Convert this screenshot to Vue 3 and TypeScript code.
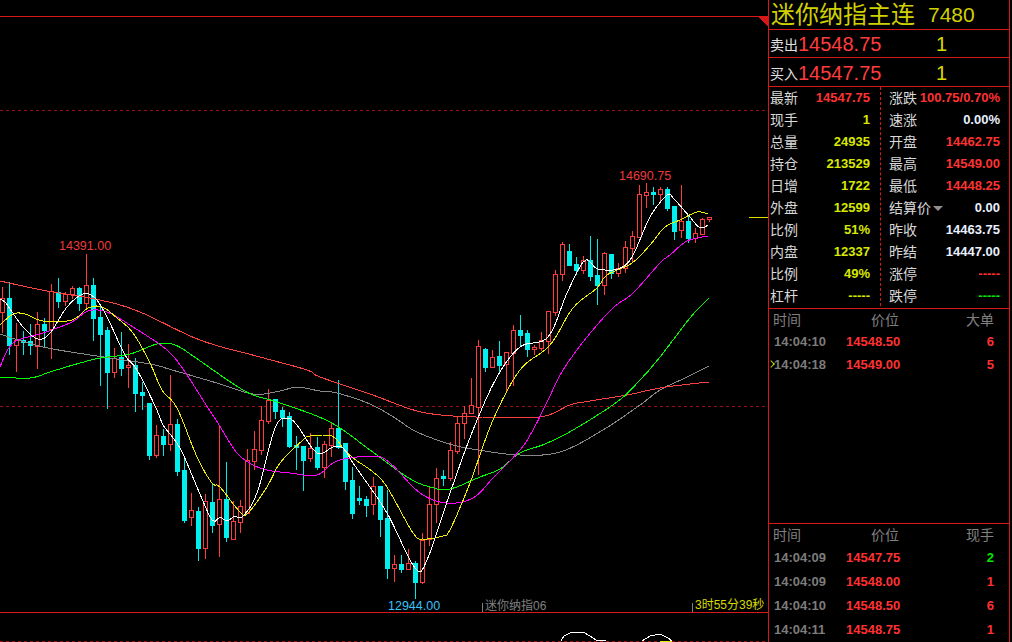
<script setup lang="ts">
const raw: [string, number, number, number, number][] = [
  ['r',287,298,312,332],['c',282,298,345,354],['r',323,340,345,371],['c',331,340,342,354],['c',324,341,345,354],
  ['r',312,324,346,368],['c',318,324,330,347],['r',284,291,329,358],['c',278,292,301,307],['r',292,294,301,305],
  ['r',286,288,294,298],['c',287,288,303,310],['r',254,285,303,307],['c',278,285,318,340],['c',307,317,334,385],
  ['c',327,330,372,408],['r',348,358,372,377],['c',332,357,368,375],['r',344,365,367,387],['c',358,365,393,411],
  ['c',382,392,395,409],['c',403,403,455,459],['r',425,435,455,457],['c',429,436,444,455],['r',375,424,444,450],
  ['c',419,424,471,475],['c',458,470,520,522],['r',493,510,517,525],['c',507,511,548,560],['r',494,501,548,558],
  ['c',483,502,525,532],['r',425,499,524,556],['c',462,499,537,541],['r',501,521,539,539],['r',500,506,522,532],
  ['r',449,460,513,513],['r',431,449,461,469],['r',406,420,450,454],['r',389,400,421,423],['c',399,399,411,418],
  ['c',407,410,417,426],['c',412,416,446,447],['c',436,445,447,469],['c',446,446,460,490],['r',433,448,458,461],
  ['c',437,447,467,469],['r',441,444,467,477],['r',422,428,445,456],['c',380,428,447,448],['c',443,443,481,489],
  ['c',467,480,513,518],['c',486,498,500,504],['c',496,499,505,516],['r',477,486,504,514],['c',486,486,519,536],
  ['c',490,518,568,578],['r',555,564,568,581],['c',555,564,569,572],['r',549,563,569,569],['c',561,563,582,598],
  ['r',533,540,582,583],['r',487,504,539,545],['r',468,478,504,522],['c',470,476,478,485],['r',442,450,478,480],
  ['r',417,423,451,453],['r',406,413,423,438],['r',378,405,413,413],['r',340,346,407,474],['c',348,349,367,371],
  ['r',350,357,367,367],['c',341,356,365,373],['r',352,352,364,390],['r',325,330,353,385],['c',315,330,335,346],
  ['c',330,333,349,356],['r',345,347,349,354],['r',332,340,348,350],['r',311,311,341,353],['r',270,274,312,315],
  ['r',242,244,274,280],['c',244,251,265,265],['c',257,264,270,274],['r',256,260,270,273],['c',236,260,276,280],
  ['c',239,275,285,304],['r',252,253,285,294],['c',254,254,273,278],['r',263,268,273,276],['r',241,247,268,272],
  ['r',231,236,248,262],['r',185,194,237,237],['r',183,192,195,207],['c',187,192,194,204],['r',187,189,194,200],
  ['c',187,189,208,210],['c',206,206,231,239],['r',185,221,230,237],['c',215,221,238,242],['r',228,233,238,242],
  ['r',218,219,234,234],['r',217,217,219,221],
]
const candles = raw.map((c, i) => {
  const x = 2 + 7 * i
  const [t, hi, top, bot, lo] = c
  return {
    key: i,
    cls: t === 'r' ? 'up' : 'down',
    wick: t === 'r'
      ? `M${x + 0.5} ${hi}V${top}M${x + 0.5} ${bot + 1}V${lo + 1}`
      : `M${x + 0.5} ${hi}V${lo + 1}`,
    rx: t === 'r' ? x - 1.5 : x - 2,
    ry: t === 'r' ? top + 0.5 : top,
    rw: t === 'r' ? 4 : 5,
    rh: t === 'r' ? bot - top : bot - top + 1,
  }
})
// smooth a hand-read list of vertices into a moving-average curve
function smooth(src: string): string {
  const p = src.split(' ').map(s => s.split(',').map(Number))
  const out: string[] = []
  for (let i = 0; i < p.length - 1; i++) {
    const a = p[Math.max(0, i - 1)], b = p[i], c = p[i + 1], d = p[Math.min(p.length - 1, i + 2)]
    const n = Math.max(2, Math.round((c[0] - b[0]) / 3))
    for (let k = 0; k < n; k++) {
      const t = k / n, t2 = t * t, t3 = t2 * t
      const cr = (j: 0 | 1) => 0.5 * (2 * b[j] + (c[j] - a[j]) * t + (2 * a[j] - 5 * b[j] + 4 * c[j] - d[j]) * t2 + (3 * b[j] - a[j] - 3 * c[j] + d[j]) * t3)
      out.push(`${cr(0).toFixed(1)},${cr(1).toFixed(1)}`)
    }
  }
  const last = p[p.length - 1]
  out.push(`${last[0]},${last[1]}`)
  return out.join(' ')
}
const lines: { cls: string; points: string }[] = [
  { cls: 'l-grey', points: '0,334 43,347 97,356 150,364 172,370 217,383 253,394 280,391 297,387 320,391 337,393 370,404 395,418 417,432 453,445 485,451 520,455 560,452 603,430 640,405 660,390 685,378 709,366' },
  { cls: 'l-long', points: '0,281 47,291 100,300 140,312 200,340 260,357 307,370 320,377 370,394 417,411 453,416 480,417 540,417 570,405 590,401 627,395 660,388 690,384 709,382' },
  { cls: 'l-green', points: '0,377 30,378 50,372 73,365 100,358 130,354 157,344 175,345 193,356 213,370 235,385 253,395 280,403 330,422 370,450 407,477 430,487 450,489 480,477 500,469 520,453 545,444 573,430 617,402 640,380 660,357 690,318 709,298' },
  { cls: 'l-mag', points: '0,367 13,343 43,333 72,322 88,311 107,312 133,327 167,350 185,372 208,408 218,423 230,443 242,458 263,469 290,473 317,475 337,461 373,456 390,463 420,493 447,503 473,498 493,478 520,450 533,430 548,400 563,370 587,337 613,308 633,293 660,263 670,255 687,241 708,236' },
  { cls: 'l-yel', points: '0,325 13,314 25,314 43,321 72,320 88,308 102,307 117,318 133,333 150,363 162,390 177,408 197,457 212,483 220,487 240,512 248,513 267,487 280,463 303,440 310,436 332,436 343,448 353,458 373,472 387,487 413,533 423,539 443,536 450,530 470,483 493,420 520,370 550,345 573,308 597,288 607,275 632,263 650,245 665,227 680,220 697,212 708,214' },
  { cls: 'l-wht', points: '0,300 5,302 23,327 38,339 50,333 67,307 83,294 95,298 107,317 125,355 137,370 157,410 163,425 180,448 197,487 212,520 220,517 227,521 235,516 242,517 257,493 275,428 287,418 297,425 317,453 333,447 343,448 353,463 360,473 387,513 415,568 427,560 450,493 473,430 497,377 520,347 548,337 567,293 583,262 590,262 598,269 618,269 632,257 650,217 667,195 673,198 690,217 700,228 708,225' },
].map(l => ({ cls: l.cls, points: smooth(l.points) }))
const statsL = [
  ['最新', '14547.75', 'red'], ['现手', '1', 'yel'], ['总量', '24935', 'yel'], ['持仓', '213529', 'yel'], ['日增', '1722', 'yel'],
  ['外盘', '12599', 'yel'], ['比例', '51%', 'yel'], ['内盘', '12337', 'yel'], ['比例', '49%', 'yel'], ['杠杆', '-----', 'yel'],
]
const statsR = [
  ['涨跌', '100.75/0.70%', 'red'], ['速涨', '0.00%', 'wht'], ['开盘', '14462.75', 'red'], ['最高', '14549.00', 'red'], ['最低', '14448.25', 'red'],
  ['结算价', '0.00', 'wht'], ['昨收', '14463.75', 'wht'], ['昨结', '14447.00', 'wht'], ['涨停', '-----', 'red'], ['跌停', '-----', 'grn'],
]
const big = [['14:04:10', '14548.50', '6'], ['14:04:18', '14549.00', '5']]
const ticks = [
  ['14:04:09', '14547.75', '2', 'grn'], ['14:04:09', '14548.00', '1', 'red'],
  ['14:04:10', '14548.50', '6', 'red'], ['14:04:11', '14548.75', '1', 'red'],
]
</script>

<template>
  <div class="app">
    <div class="chart">
      <svg class="plot" width="768" height="642" viewBox="0 0 768 642">
        <path class="frame" d="M0 16.5H768M0 612.5H768" />
        <path class="corner" d="M758 17H768V27Z" />
        <path class="dots" d="M0 110.5H768M0 406.5H768M0 641.5H768" />
        <path class="tick" d="M482.5 603V612M692.5 603V612" />
        <path class="marker" d="M749 217.5H768" />
        <g v-for="c in candles" :key="c.key" :class="c.cls">
          <path class="wick" :d="c.wick" />
          <rect class="body" :x="c.rx" :y="c.ry" :width="c.rw" :height="c.rh" />
        </g>
        <polyline v-for="l in lines" :key="l.cls" :class="l.cls" :points="l.points" />
        <path class="l-wht" d="M561 641L564 636L570 633L583 632L590 636L596 640L606 641M642 641L650 636L660 634L668 638L672 641" />
        <path class="l-yel2" d="M660 641.5H672" />
        <text class="lbl lbl-red" x="59" y="250">14391.00</text>
        <text class="lbl lbl-red" x="619" y="180">14690.75</text>
        <text class="lbl lbl-blue" x="388" y="610">12944.00</text>
        <text class="lbl lbl-grey" x="485" y="610">迷你纳指06</text>
        <text class="lbl lbl-yel" x="695" y="609">3时55分39秒</text>
      </svg>
    </div>
    <aside class="side">
      <div class="title"><span class="name">迷你纳指主连</span><span class="code">7480</span></div>
      <div class="quote q-first">
        <span class="q-label">卖出</span><span class="q-price">14548.75</span><span class="q-size">1</span>
      </div>
      <div class="quote q-second">
        <span class="q-label">买入</span><span class="q-price">14547.75</span><span class="q-size">1</span>
      </div>
      <div class="stats">
        <div class="col col-l">
          <div v-for="(s, i) in statsL" :key="i" class="stat">
            <span class="s-label">{{ s[0] }}</span><span class="s-val" :class="s[2]">{{ s[1] }}</span>
          </div>
        </div>
        <div class="col col-r">
          <div v-for="(s, i) in statsR" :key="i" class="stat">
            <span class="s-label">{{ s[0] }}<i v-if="s[0] === '结算价'" class="caret"></i></span><span class="s-val" :class="s[2]">{{ s[1] }}</span>
          </div>
        </div>
      </div>
      <div class="trades big">
        <div class="t-row t-head"><span>时间</span><span>价位</span><span>大单</span></div>
        <div v-for="(r, i) in big" :key="i" class="t-row t-data">
          <span class="t-time">{{ r[0] }}<i v-if="i === 1" class="pointer"></i></span><span class="red">{{ r[1] }}</span><span class="red">{{ r[2] }}</span>
        </div>
      </div>
      <div class="trades tape">
        <div class="t-row t-head"><span>时间</span><span>价位</span><span>现手</span></div>
        <div v-for="(r, i) in ticks" :key="i" class="t-row t-data">
          <span class="t-time">{{ r[0] }}</span><span class="red">{{ r[1] }}</span><span :class="r[3]">{{ r[2] }}</span>
        </div>
      </div>
    </aside>
  </div>
</template>

<style>
html, body { margin: 0; background: #000; overflow: hidden; }
</style>

<style scoped>
.app { display: flex; width: 1012px; height: 642px; background: #000; overflow: hidden; font-family: "Liberation Sans", "Noto Sans CJK SC", sans-serif; }
.chart { width: 768px; flex: none; height: 642px; }
.plot { display: block; shape-rendering: crispEdges; }
.plot path, .plot polyline { fill: none; }
.frame { stroke: #d81818; }
.plot .corner { fill: #d81818; stroke: none; }
.dots { stroke: #a01010; stroke-dasharray: 3 3; }
.tick { stroke: #808080; }
.marker { stroke: #e0e000; }
.up .wick { stroke: #ff3c3c; }
.up .body { fill: #000; stroke: #ff3c3c; }
.down .wick { stroke: #00e8e8; }
.down .body { fill: #00f0f0; }
.l-grey { stroke: #888; }
.l-long { stroke: #ff4040; }
.l-green { stroke: #00ff00; }
.l-mag { stroke: #ff00ff; }
.l-yel { stroke: #f0f000; }
.l-wht { stroke: #fff; }
.l-yel2 { stroke: #e8e800; }
.lbl { font-size: 12.5px; shape-rendering: auto; }
.lbl-red { fill: #ee3a3a; }
.lbl-blue { fill: #38c0f8; }
.lbl-grey { fill: #808080; font-size: 12px; }
.lbl-yel { fill: #d8d800; font-size: 12px; }

.side { width: 242px; flex: none; height: 642px; box-sizing: border-box; border-left: 1px solid #d81818; border-right: 1px solid #d81818; display: flex; flex-direction: column; color: #d8d8d8; }
.title { height: 29px; flex: none; box-sizing: border-box; padding-left: 2px; display: flex; align-items: center; color: #d0d000; white-space: nowrap; }
.name { font-size: 24px; width: 157px; line-height: 29px; }
.code { font-size: 21px; line-height: 29px; }
.quote { flex: none; box-sizing: border-box; border-top: 1px solid #d81818; display: flex; align-items: center; padding-left: 1px; white-space: nowrap; }
.q-first { height: 28px; padding-top: 1px; }
.q-second { height: 29px; padding-top: 2px; }
.q-label { font-size: 14px; width: 28px; color: #e0e0e0; }
.q-price { font-size: 20px; width: 138px; color: #ff3c3c; }
.q-size { font-size: 20px; color: #d8d800; }
.stats { height: 223px; flex: none; box-sizing: border-box; border-top: 1px solid #d81818; border-bottom: 1px solid #d81818; display: flex; }
.col { display: flex; flex-direction: column; box-sizing: border-box; height: 219px; }
.col-l { width: 111px; padding: 0 10px 0 1px; }
.col-r { width: 129px; padding: 0 9px 0 8px; border-left: 1px dashed #d81818; }
.stat { height: 22px; flex: none; display: flex; justify-content: space-between; align-items: center; white-space: nowrap; }
.stat:first-child { margin-top: -1px; }
.s-label { font-size: 14px; color: #d8d8d8; display: flex; align-items: center; }
.s-val { font-size: 13px; font-weight: 700; }
.caret { display: block; width: 0; height: 0; margin-left: 2px; margin-top: 2px; border: 5px solid transparent; border-bottom: 0; border-top-color: #909090; }
.red { color: #ff3232; }
.yel { color: #d8e800; }
.wht { color: #e8f0ff; }
.grn { color: #00e800; }
.trades { display: flex; flex-direction: column; box-sizing: border-box; padding: 0 15px 0 4px; }
.big { height: 214px; flex: none; }
.tape { flex: 1; border-top: 1px solid #d81818; }
.t-row { display: grid; grid-template-columns: 73px 1fr auto; align-items: center; }
.t-head { height: 21px; box-sizing: border-box; padding-bottom: 2px; font-size: 14px; color: #808080; flex: none; }
.t-head > :nth-child(2) { padding-left: 25px; }
.t-data { height: 24px; flex: none; font-size: 13px; font-weight: 700; }
.t-time { color: #7c7c7c; position: relative; padding-left: 1px; }
.pointer { position: absolute; left: -5px; top: 4px; width: 5px; height: 5px; border-top: 1px solid #d8e800; border-right: 1px solid #d8e800; transform: rotate(45deg) scale(.9); }
.big .t-data:nth-child(2) { height: 22px; }
</style>
